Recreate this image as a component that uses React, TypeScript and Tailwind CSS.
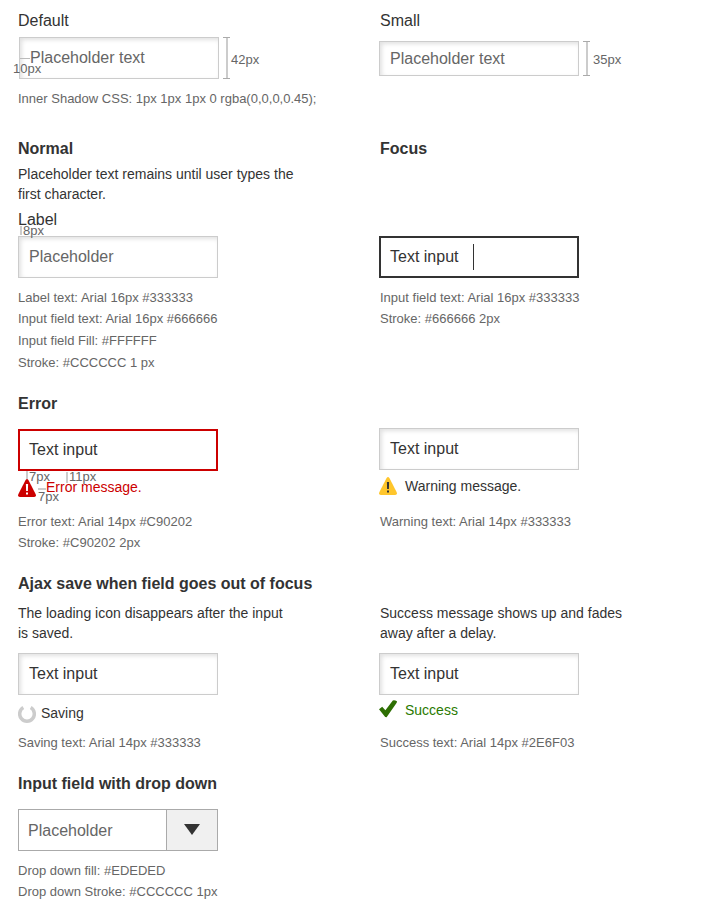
import React from "react";
import clsx from "clsx";

type KidsProps = { children?: React.ReactNode; className?: string };

function Heading({ children, className }: KidsProps) {
  return <h2 className={clsx("h-5 whitespace-nowrap text-base leading-[22px] text-[#333]", className)}>{children}</h2>;
}

function Body({ children, className }: KidsProps) {
  return <p className={clsx("whitespace-nowrap text-sm leading-5 text-[#333]", className)}>{children}</p>;
}

function Notes({ lines, className }: { lines: string[]; className?: string }) {
  return (
    <div className={clsx("whitespace-nowrap text-[13px] leading-[22px] text-[#666]", className)}>
      {lines.map((line, i) => (
        <p key={line} className={i === 1 ? "-mt-px" : ""}>
          {line}
        </p>
      ))}
    </div>
  );
}

function Field({ children, className }: KidsProps) {
  return (
    <div
      className={clsx(
        "relative flex w-[200px] shrink-0 items-center border border-[#ccc] bg-white pl-2.5 text-base leading-5 shadow-[inset_2px_2px_4px_rgba(0,0,0,0.12)]",
        className,
      )}
    >
      {children}
    </div>
  );
}

/* Vertical bracket that marks the height of a field. */
function Bracket({ className }: { className: string }) {
  return (
    <div className={clsx("flex w-[7px] flex-col items-center", className)}>
      <div className="h-px w-full bg-[#aaa]" />
      <div className="w-[2px] grow bg-[#ccc]" />
      <div className="h-px w-full bg-[#aaa]" />
    </div>
  );
}

function AlertIcon({ fill, mark }: { fill: string; mark: string }) {
  return (
    <svg width="18" height="18" viewBox="0 0 18 18" className="shrink-0">
      <path d="M7.6.9Q9-.9 10.4.9L17.7 15.3Q18.6 17.8 16.2 18H1.8Q-.6 17.8.3 15.3Z" fill={fill} />
      <path d="M7.9 5H10.1L9.9 12H8.1ZM8 13.6H10V15.6H8Z" fill={mark} />
    </svg>
  );
}

const note = "absolute z-10 whitespace-nowrap text-[13px] leading-4 text-[#666]";
const row = "grid shrink-0 grid-cols-[361px_1fr] pl-[18px]";

export default function App() {
  return (
    <main className="flex h-[912px] w-[728px] flex-col overflow-hidden bg-white font-['Liberation_Sans',Arial,sans-serif]">
      <section className={clsx(row, "h-[138px] pt-2.5")}>
        <div>
          <Heading>Default</Heading>
          <div className="mt-[7px] ml-px flex items-center">
            <Field className="h-[42px] text-[#666]">
              Placeholder text
              <div className="absolute left-0 top-[20px] h-px w-2.5 bg-[#bbb]" />
              <span className={clsx(note, "-left-[7px] top-[23px]")}>10px</span>
            </Field>
            <Bracket className="ml-1 h-[42px]" />
            <span className="ml-[1px] mt-1 text-[13px] leading-4 text-[#666]">42px</span>
          </div>
          <Notes className="mt-[9px]" lines={["Inner Shadow CSS: 1px 1px 1px 0 rgba(0,0,0,0.45);"]} />
        </div>
        <div>
          <Heading className="ml-px">Small</Heading>
          <div className="mt-[11px] flex items-center">
            <Field className="h-[35px] text-[#666]">Placeholder text</Field>
            <Bracket className="ml-1 h-[35px]" />
            <span className="ml-[3px] mt-0.5 text-[13px] leading-4 text-[#666]">35px</span>
          </div>
        </div>
      </section>

      <section className={clsx(row, "h-[255px]")}>
        <div>
          <Heading className="font-bold">Normal</Heading>
          <Body className="mt-1.5">
            Placeholder text remains until user types the
            <br />
            first character.
          </Body>
          <div className="relative mt-[5px] h-5 text-base leading-[22px] text-[#333]">
            Label
            <div className="absolute left-[2px] top-[17px] h-[9px] w-[2px] bg-[#ccc]" />
            <span className={clsx(note, "left-[5px] top-[14px]")}>8px</span>
          </div>
          <Field className="mt-[7px] h-[42px] text-[#666]">Placeholder</Field>
          <Notes
            className="mt-[9px]"
            lines={[
              "Label text: Arial 16px #333333",
              "Input field text: Arial 16px #666666",
              "Input field Fill: #FFFFFF",
              "Stroke: #CCCCCC 1 px",
            ]}
          />
        </div>
        <div>
          <Heading className="ml-px font-bold">Focus</Heading>
          <div className="mt-[78px] flex h-[42px] w-[200px] items-center border-2 border-[#333] pl-[9px] text-base text-[#333]">
            Text input
            <div className="-mt-px ml-[15px] h-[26px] w-px bg-[#333]" />
          </div>
          <Notes className="ml-px mt-[9px]" lines={["Input field text: Arial 16px #333333", "Stroke: #666666 2px"]} />
        </div>
      </section>

      <section className={clsx(row, "h-[180px]")}>
        <div>
          <Heading className="font-bold">Error</Heading>
          <div className="mt-4 flex h-[42px] w-[200px] items-center border-2 border-[#cc0000] pl-[9px] text-base text-[#333]">
            Text input
          </div>
          <div className="relative mt-2 flex h-[18px] items-center">
            <AlertIcon fill="#cc0000" mark="#fff" />
            <span className="relative z-20 -mt-0.5 ml-2.5 text-sm leading-5 text-[#cc0000]">Error message.</span>
            <div className="absolute -top-[8px] left-[8px] h-[8px] w-[2px] bg-[#ccc]" />
            <span className={clsx(note, "-top-[10px] left-[11px]")}>7px</span>
            <div className="absolute -top-[7px] left-[48px] h-[11px] w-[2px] bg-[#ccc]" />
            <span className={clsx(note, "-top-[10px] left-[51px]")}>11px</span>
            <div className="absolute left-5 top-[9px] h-[2px] w-[8px] bg-[#ccc]" />
            <span className={clsx(note, "left-5 top-[10px]")}>7px</span>
          </div>
          <Notes className="mt-[14px]" lines={["Error text: Arial 14px #C90202", "Stroke: #C90202 2px"]} />
        </div>
        <div>
          <Field className="mt-[35px] h-[42px] text-[#333]">Text input</Field>
          <div className="mt-[7px] flex h-[18px] items-center">
            <AlertIcon fill="#ffc62c" mark="#333" />
            <span className="ml-2 text-sm leading-5 text-[#333]">Warning message.</span>
          </div>
          <Notes className="ml-px mt-4" lines={["Warning text: Arial 14px #333333"]} />
        </div>
      </section>

      <section className={clsx(row, "h-[200px]")}>
        <div>
          <Heading className="font-bold">Ajax save when field goes out of focus</Heading>
          <Body className="mt-2.5">
            The loading icon disappears after the input
            <br />
            is saved.
          </Body>
          <Field className="mt-2.5 h-[42px] text-[#333]">Text input</Field>
          <div className="mt-2.5 flex h-[18px] items-center">
            <svg width="18" height="18" viewBox="0 0 18 18" fill="none" className="shrink-0">
              <path d="M5.3 2.6A7.3 7.3 0 1 0 12.7 2.6" stroke="#ccc" strokeWidth="3.5" />
            </svg>
            <span className="-mt-0.5 ml-[5px] text-sm leading-5 text-[#333]">Saving</span>
          </div>
          <Notes className="mt-[9px]" lines={["Saving text: Arial 14px #333333"]} />
        </div>
        <div>
          <Body className="ml-px mt-[30px]">
            Success message shows up and fades
            <br />
            away after a delay.
          </Body>
          <Field className="mt-2.5 h-[42px] text-[#333]">Text input</Field>
          <div className="mt-[5px] flex h-[18px] items-center">
            <svg width="18" height="18" viewBox="0 0 18 18" className="shrink-0">
              <path d="M0 9.2L3.2 6.8L6.4 10.2L13.8.5Q15.2-.4 18 1.2L17.7 2.8L7.6 17.2L6.2 17Z" fill="#2e6f03" />
            </svg>
            <span className="ml-2 mt-[2px] text-sm leading-5 text-[#2a7a00]">Success</span>
          </div>
          <Notes className="ml-px mt-[14px]" lines={["Success text: Arial 14px #2E6F03"]} />
        </div>
      </section>

      <section className={clsx(row, "h-[139px]")}>
        <div>
          <Heading className="font-bold">Input field with drop down</Heading>
          <div className="mt-4 flex h-[42px] w-[200px] border border-[#aaa]">
            <div className="flex grow items-center pl-[9px] pt-px text-base text-[#666]">Placeholder</div>
            <div className="flex w-[51px] items-center justify-center border-l border-[#aaa] bg-[#f0f0f0] pb-px">
              <svg width="16" height="11" viewBox="0 0 16 11">
                <path d="M0 0H16L8 11Z" fill="#333" />
              </svg>
            </div>
          </div>
          <Notes className="mt-[9px]" lines={["Drop down fill: #EDEDED", "Drop down Stroke: #CCCCCC 1px"]} />
        </div>
      </section>
    </main>
  );
}
